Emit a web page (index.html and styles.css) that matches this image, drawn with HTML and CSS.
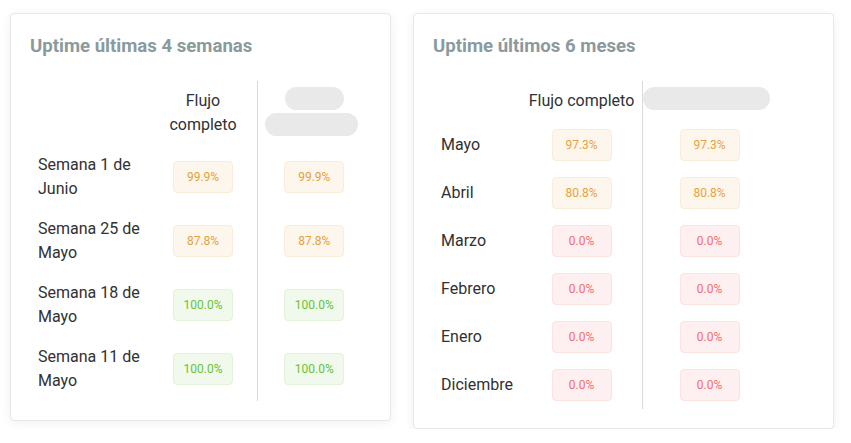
FILE: index.html
```html
<!DOCTYPE html>
<html lang="es">
<head>
<meta charset="utf-8">
<title>Uptime</title>
<link rel="stylesheet" href="styles.css">
</head>
<body>
<div class="page">
  <section class="card card-weeks">
    <h2 class="card-title">Uptime últimas 4 semanas</h2>
    <div class="grid grid-weeks">
      <div class="cell head"></div>
      <div class="cell head c1">Flujo<br>completo</div>
      <div class="cell head c2 sep"><span class="pill pill-a"></span><span class="pill pill-b"></span></div>

      <div class="cell label">Semana 1 de<br>Junio</div>
      <div class="cell c1"><span class="tag warn">99.9%</span></div>
      <div class="cell c2 sep"><span class="tag warn">99.9%</span></div>

      <div class="cell label">Semana 25 de<br>Mayo</div>
      <div class="cell c1"><span class="tag warn">87.8%</span></div>
      <div class="cell c2 sep"><span class="tag warn">87.8%</span></div>

      <div class="cell label">Semana 18 de<br>Mayo</div>
      <div class="cell c1"><span class="tag ok">100.0%</span></div>
      <div class="cell c2 sep"><span class="tag ok">100.0%</span></div>

      <div class="cell label">Semana 11 de<br>Mayo</div>
      <div class="cell c1"><span class="tag ok">100.0%</span></div>
      <div class="cell c2 sep"><span class="tag ok">100.0%</span></div>
    </div>
  </section>

  <section class="card card-months">
    <h2 class="card-title">Uptime últimos 6 meses</h2>
    <div class="grid grid-months">
      <div class="cell head"></div>
      <div class="cell head c1 nowrap">Flujo completo</div>
      <div class="cell head c2 sep head-wide"><span class="pill pill-c"></span></div>

      <div class="cell label">Mayo</div>
      <div class="cell c1"><span class="tag warn">97.3%</span></div>
      <div class="cell c2 sep"><span class="tag warn">97.3%</span></div>

      <div class="cell label">Abril</div>
      <div class="cell c1"><span class="tag warn">80.8%</span></div>
      <div class="cell c2 sep"><span class="tag warn">80.8%</span></div>

      <div class="cell label">Marzo</div>
      <div class="cell c1"><span class="tag bad">0.0%</span></div>
      <div class="cell c2 sep"><span class="tag bad">0.0%</span></div>

      <div class="cell label">Febrero</div>
      <div class="cell c1"><span class="tag bad">0.0%</span></div>
      <div class="cell c2 sep"><span class="tag bad">0.0%</span></div>

      <div class="cell label">Enero</div>
      <div class="cell c1"><span class="tag bad">0.0%</span></div>
      <div class="cell c2 sep"><span class="tag bad">0.0%</span></div>

      <div class="cell label">Diciembre</div>
      <div class="cell c1"><span class="tag bad">0.0%</span></div>
      <div class="cell c2 sep"><span class="tag bad">0.0%</span></div>
    </div>
  </section>
</div>
</body>
</html>
```

FILE: styles.css
```css
* { box-sizing: border-box; }
html, body { margin: 0; padding: 0; background: #fff; }
body {
  font-family: Roboto, "Liberation Sans", sans-serif;
  color: #303133;
}
.page {
  display: flex;
  align-items: flex-start;
  gap: 22px;
  padding: 13px 0 0 10px;
}
.card {
  background: #fff;
  border: 1px solid #e6e7eb;
  border-radius: 4px;
  box-shadow: 0 2px 12px 0 rgba(0, 0, 0, 0.06);
  padding: 20px 19px 19px 19px;
}
.card-weeks { width: 381px; }
.card-months { width: 421px; }
.card-title {
  margin: 0 0 23px 0;
  font-size: 18.6px;
  line-height: 24px;
  font-weight: 700;
  color: #8a9a9d;
}
.grid { display: grid; }
.grid-weeks { grid-template-columns: 119.5px 107px 114.5px; }
.grid-months { grid-template-columns: 88px 121px 134px; }
.cell {
  padding: 8px;
  font-size: 16px;
  line-height: 24px;
  display: flex;
  align-items: center;
  justify-content: center;
}
.grid-weeks .cell { min-height: 64px; }
.grid-months .cell { min-height: 48px; }
.grid-months .cell.head { min-height: 40px; }
.cell.head { text-align: center; flex-direction: column; }
.cell.label { justify-content: flex-start; }
.nowrap { white-space: nowrap; }
.sep { border-left: 1px solid #d5dbde; }
.tag {
  display: inline-flex;
  align-items: center;
  justify-content: center;
  width: 60px;
  height: 32px;
  font-size: 12px;
  border-radius: 4px;
  border: 1px solid;
  white-space: nowrap;
}
.warn { background: #fdf6ec; border-color: #faecd8; color: #e6a23c; }
.ok { background: #f0f9eb; border-color: #e1f3d8; color: #67c23a; }
.bad { background: #fef0f0; border-color: #fde2e2; color: #f56c6c; }
.pill {
  display: block;
  background: #e9e9e9;
  border-radius: 12px;
  height: 23px;
}
.pill-a { width: 59px; margin: -3px 0 0 0; }
.pill-b { width: 93px; margin: 3px 6px 0 0; }
.head-wide { flex-direction: row; align-items: flex-start; justify-content: flex-start; padding-left: 0; }
.pill-c { width: 127px; flex: none; margin-top: -2px; }
```
